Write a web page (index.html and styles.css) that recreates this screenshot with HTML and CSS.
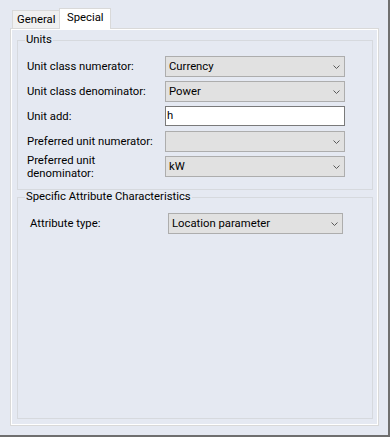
FILE: index.html
```html
<!DOCTYPE html>
<html>
<head>
<meta charset="utf-8">
<link rel="stylesheet" href="styles.css">
</head>
<body>
<div class="window">
  <div class="tabs">
    <div class="tab">General</div>
    <div class="tab active">Special</div>
  </div>
  <div class="page">
    <fieldset class="group units">
      <legend>Units</legend>
      <div class="rows">
        <div class="row">
          <span class="label">Unit class numerator:</span>
          <div class="combo"><span class="val">Currency</span><svg class="chev" width="7" height="4" viewBox="0 0 7 4"><polyline points="0.5,0.5 3.5,3.5 6.5,0.5" fill="none" stroke="#5a5a5a" stroke-width="1"/></svg></div>
        </div>
        <div class="row">
          <span class="label">Unit class denominator:</span>
          <div class="combo"><span class="val">Power</span><svg class="chev" width="7" height="4" viewBox="0 0 7 4"><polyline points="0.5,0.5 3.5,3.5 6.5,0.5" fill="none" stroke="#5a5a5a" stroke-width="1"/></svg></div>
        </div>
        <div class="row">
          <span class="label">Unit add:</span>
          <div class="textbox">h</div>
        </div>
        <div class="row">
          <span class="label">Preferred unit numerator:</span>
          <div class="combo"><span class="val"></span><svg class="chev" width="7" height="4" viewBox="0 0 7 4"><polyline points="0.5,0.5 3.5,3.5 6.5,0.5" fill="none" stroke="#5a5a5a" stroke-width="1"/></svg></div>
        </div>
        <div class="row">
          <span class="label two">Preferred unit<br>denominator:</span>
          <div class="combo"><span class="val">kW</span><svg class="chev" width="7" height="4" viewBox="0 0 7 4"><polyline points="0.5,0.5 3.5,3.5 6.5,0.5" fill="none" stroke="#5a5a5a" stroke-width="1"/></svg></div>
        </div>
      </div>
    </fieldset>
    <fieldset class="group attr">
      <legend>Specific Attribute Characteristics</legend>
      <div class="rows attr-rows">
        <div class="row">
          <span class="label">Attribute type:</span>
          <div class="combo wide"><span class="val">Location parameter</span><svg class="chev" width="7" height="4" viewBox="0 0 7 4"><polyline points="0.5,0.5 3.5,3.5 6.5,0.5" fill="none" stroke="#5a5a5a" stroke-width="1"/></svg></div>
        </div>
      </div>
    </fieldset>
  </div>
</div>
</body>
</html>
```

FILE: styles.css
```css
* { box-sizing: border-box; }
html, body { margin: 0; padding: 0; }
body {
  font-family: Roboto, "Liberation Sans", sans-serif;
  font-size: 11.3px;
  color: #000;
  background: #e5e9f2;
}
.window {
  width: 390px;
  height: 437px;
  background: #e5e9f2;
  border-right: 2px solid #6f6f6f;
  border-bottom: 2px solid #6f6f6f;
  padding: 8px 0 0 10px;
  display: flex;
  flex-direction: column;
}
.tabs {
  display: flex;
  align-items: flex-end;
  height: 20px;
  padding-left: 2px;
  position: relative;
  z-index: 2;
}
.tab {
  width: 48px;
  height: 18px;
  padding-left: 4px;
  line-height: 17px;
  background: #f0f0f0;
  border: 1px solid #d9d9d9;
  border-bottom: none;
  white-space: nowrap;
}
.tab.active {
  width: 52px;
  height: 21px;
  margin-bottom: -1px;
  margin-left: -1px;
  background: #fff;
  padding-left: 7px;
  line-height: 18px;
}
.page {
  width: 369px;
  height: 398px;
  border: 1px solid #d9d9d9;
  box-shadow: inset 0 0 0 1px #fff;
  padding: 4px 5px 6px 6px;
  display: flex;
  flex-direction: column;
}
.group {
  margin: 0;
  padding: 0;
  border: 1px solid #d6d9de;
  min-width: 0;
}
.group legend {
  padding: 0 1px;
  margin-left: 7px;
  line-height: 14px;
  height: 14px;
}
.rows {
  display: flex;
  flex-direction: column;
  gap: 4px;
  padding: 9px 0 12px 9px;
}
.attr { flex: 1; }
.rows.attr-rows {
  padding: 9px 0 0 12px;
}
.row {
  display: flex;
  align-items: center;
  height: 21px;
}
.label {
  width: 138px;
  flex: none;
  white-space: nowrap;
}
.label.two {
  line-height: 13px;
}
.combo {
  width: 180px;
  height: 21px;
  background: #e1e1e1;
  border: 1px solid #adadad;
  display: flex;
  align-items: center;
  justify-content: space-between;
  padding: 0 4px 0 3px;
}
.combo.wide { width: 175px; }
.chev { display: block; flex: none; }
.textbox {
  width: 180px;
  height: 20px;
  align-self: flex-start;
  background: #fff;
  border: 1px solid #7a7a7a;
  padding: 0 1px;
  line-height: 18px;
}
```
